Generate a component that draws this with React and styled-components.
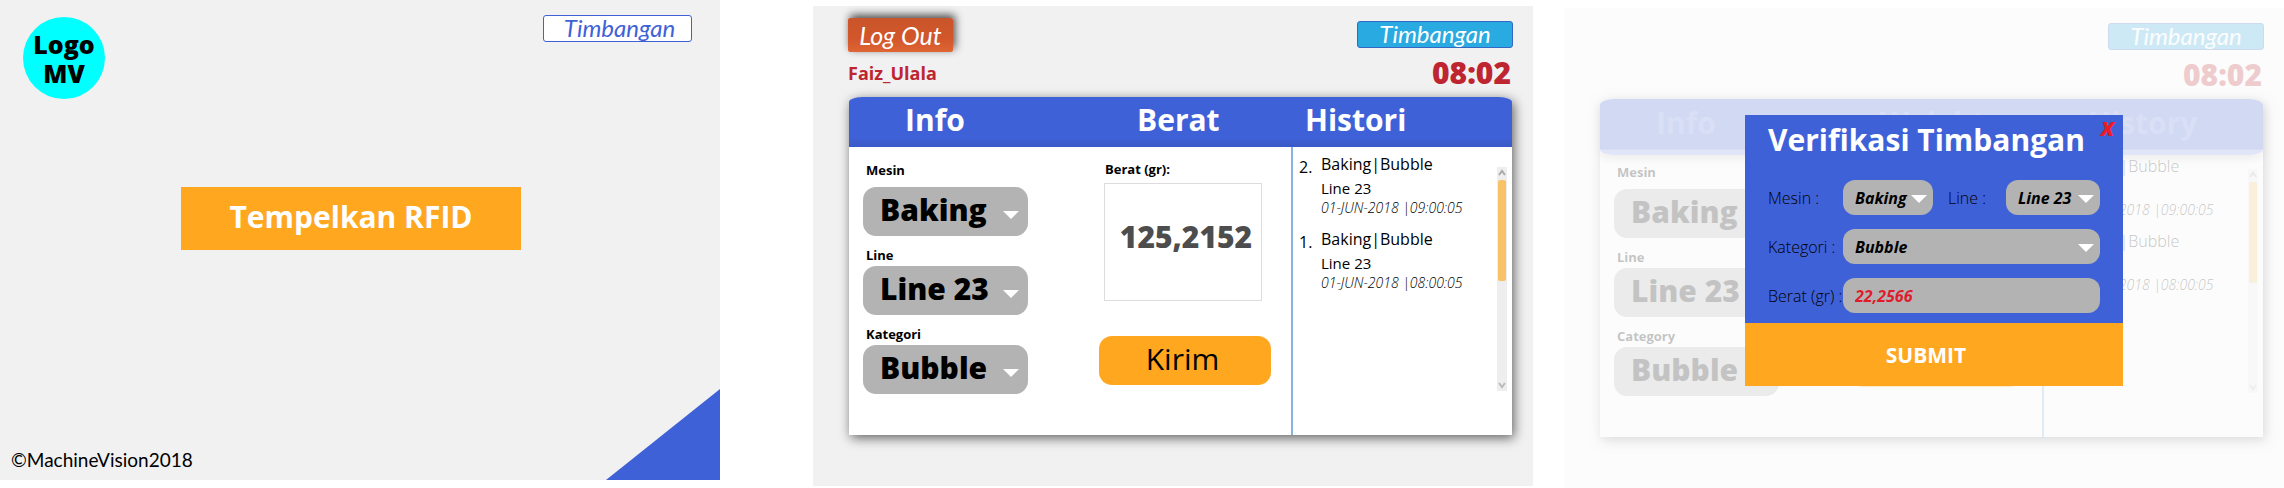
import React, { useId } from "react";
import styled, { createGlobalStyle, css } from "styled-components";

const blue = "#3f61d8";
const orange = "#ffa71f";
const grey = "#b3b3b3";
const red = "#be2530";

const Global = createGlobalStyle`
  * { box-sizing: border-box; }
  body { margin: 0; background: #fff; color: #000; font-family: "Open Sans", "Noto Sans", sans-serif; }
  h1, h2, p, ol { margin: 0; padding: 0; }
  button, select, input { font-family: inherit; border: 0; margin: 0; padding: 0; }
`;

const Page = styled.main`
  display: flex;
  align-items: flex-start;
  min-width: 2000px;
`;

const Screen = styled.section`
  position: relative;
  flex: 1 1 0;
  min-width: 0;
  min-height: 480px;
  display: flex;
  flex-direction: column;
  background: ${(p) => p.$bg || "#f1f1f1"};
  margin: ${(p) => p.$margin || "0"};
`;

/* ---- Welcome screen ---- */

const WelcomeTop = styled.header`
  display: flex;
  justify-content: space-between;
  align-items: flex-start;
  padding: 15px 28px 0 23px;
`;

const Logo = styled.div`
  width: 82px;
  height: 82px;
  margin-top: 2px;
  padding-top: 13px;
  border-radius: 50%;
  background: #00ffff;
  font-size: 25px;
  font-weight: 800;
  line-height: 29px;
  text-align: center;
`;

const Badge = styled.div`
  width: ${(p) => (p.$filled ? 156 : 149)}px;
  height: 27px;
  padding-left: ${(p) => (p.$filled ? 0 : 4)}px;
  border: 1px solid ${(p) => (p.$filled ? "#3567c4" : blue)};
  border-radius: 3px;
  background: ${(p) => (p.$filled ? "#29abe2" : "#fff")};
  color: ${(p) => (p.$filled ? "#fff" : blue)};
  font-family: Lato, "Open Sans", sans-serif;
  font-style: italic;
  font-size: 24px;
  line-height: 24px;
  text-align: center;
`;

const ScanButton = styled.button`
  width: 340px;
  height: 63px;
  margin: 88px auto 0 181px;
  padding-bottom: 4px;
  background: ${orange};
  color: #fff;
  font-size: 30px;
  font-weight: 700;
`;

const WelcomeFoot = styled.footer`
  flex: 1;
  display: flex;
  justify-content: space-between;
  align-items: flex-end;
  padding-left: 11px;
`;

const Copyright = styled.p`
  padding-bottom: 8px;
  font-family: Lato, "Open Sans", sans-serif;
  font-size: 19px;
  line-height: 24px;
`;

const Corner = styled.svg`
  display: block;
  width: 114px;
  height: 91px;
`;

/* ---- Weighing screen ---- */

const Faded = styled.div`
  opacity: ${(p) => (p.$faded ? 0.22 : 1)};
`;

const TopBar = styled.header`
  display: flex;
  justify-content: space-between;
  height: 91px;
  padding: 12px 20px 0 35px;
`;

const TopSide = styled.div`
  display: flex;
  flex-direction: column;
  gap: 9px;
  align-items: ${(p) => (p.$end ? "flex-end" : "flex-start")};
  padding-top: ${(p) => (p.$end ? 3 : 0)}px;
`;

const LogOut = styled.button`
  width: 105px;
  height: 34px;
  border-radius: 2px;
  background: linear-gradient(#c9552a, #d2562a 60%, #df6534);
  box-shadow: 2px -3px 8px rgba(0, 0, 0, 0.7);
  color: #fff;
  font-family: Lato, "Open Sans", sans-serif;
  font-style: italic;
  font-size: 25px;
  line-height: 30px;
`;

const UserName = styled.p`
  color: ${red};
  font-size: 18px;
  font-weight: 700;
  line-height: 24px;
`;

const Clock = styled.time`
  padding-right: 2px;
  color: ${red};
  font-size: 30px;
  font-weight: 800;
  line-height: 32px;
`;

const Panel = styled.div`
  height: 338px;
  margin: 0 21px 0 36px;
  border-radius: 14px 14px 0 0 / 5px 5px 0 0;
  background: #fff;
  box-shadow: 2px 3px 12px rgba(0, 0, 0, 0.6);
`;

const columns = css`
  display: grid;
  grid-template-columns: 250fr 192fr 221fr;
`;

const PanelHead = styled.div`
  ${columns}
  height: 50px;
  border-radius: 14px 14px 0 0 / 5px 5px 0 0;
  background: linear-gradient(${blue} 40px, #3a59c6 50px);
  ${(p) =>
    p.$faded &&
    css`
      height: 56px;
      margin-bottom: -6px;
      border-radius: 14px / 6px;
      background: linear-gradient(${blue} 49px, #3a59c6 50px, #7f96e6 51px);
      box-shadow: 0 4px 8px rgba(0, 0, 0, 0.25);
    `}
`;

const HeadTitle = styled.h2`
  padding-left: ${(p) => p.$indent}px;
  color: ${(p) => (p.$faded ? "rgba(255, 255, 255, 0.2)" : "#fff")};
  font-size: 30px;
  font-weight: 700;
  line-height: ${(p) => (p.$faded ? 48 : 45)}px;
`;

const PanelBody = styled.div`
  ${columns}
  height: 288px;
`;

const InfoColumn = styled.div`
  display: flex;
  flex-direction: column;
  gap: 10px;
  padding: 14px 0 0 14px;
`;

const FieldLabel = styled.label`
  display: block;
  padding-left: 3px;
  margin-bottom: ${(p) => (p.$roomy ? 8 : 2)}px;
  font-size: 13px;
  font-weight: 700;
  line-height: 18px;
`;

const SelectWrap = styled.div`
  position: relative;
  width: ${(p) => p.$width || "100%"};
`;

const bigControl = css`
  height: 49px;
  padding: 0 30px 4px 17px;
  border-radius: 13px;
  font-size: 30px;
  font-weight: 800;
`;

const smallControl = css`
  height: 35px;
  padding: 0 22px 0 12px;
  border-radius: 12px;
  font-size: 16px;
  font-weight: 700;
  font-style: italic;
`;

const Select = styled.select`
  appearance: none;
  display: block;
  width: 100%;
  background: ${grey};
  color: #000;
  ${(p) => (p.$small ? smallControl : bigControl)}
`;

const Arrow = styled.svg`
  position: absolute;
  right: ${(p) => (p.$small ? 6 : 9)}px;
  top: ${(p) => (p.$small ? 15 : 24)}px;
  width: 16px;
  height: 8px;
  pointer-events: none;
`;

const WeightColumn = styled.div`
  padding-top: 13px;
`;

const WeightLabel = styled(FieldLabel)`
  padding-left: 6px;
  margin-bottom: 5px;
`;

const WeightValue = styled.output`
  display: block;
  width: 158px;
  height: 118px;
  margin-left: 5px;
  padding-left: 6px;
  border: 1px solid #ddd;
  color: #4d4d4d;
  font-size: 30px;
  font-weight: 800;
  line-height: 106px;
  text-align: center;
`;

const SendButton = styled.button`
  width: 172px;
  height: 49px;
  margin-top: 35px;
  padding: 0 5px 5px 0;
  border-radius: 13px;
  background: ${orange};
  color: #000;
  font-size: 30px;
`;

const HistoryColumn = styled.div`
  display: flex;
  justify-content: space-between;
  align-items: flex-start;
  padding: 4px 5px 0 6px;
  border-left: 2px solid #86b4de;
`;

const HistoryList = styled.ol`
  list-style: none;
`;

const HistoryItem = styled.li`
  display: flex;
  height: 75px;
`;

const ItemNumber = styled.span`
  width: 22px;
  font-size: 16px;
  line-height: 32px;
  white-space: nowrap;
`;

const ItemTitle = styled.p`
  font-size: 16px;
  font-weight: ${(p) => (p.$faded ? 300 : 400)};
  line-height: 27px;
`;

const ItemLine = styled.p`
  font-size: 15px;
  line-height: 20px;
`;

const ItemDate = styled.time`
  display: block;
  font-size: 14px;
  font-style: italic;
  font-weight: 300;
  line-height: 19px;
`;

const ScrollTrack = styled.div`
  display: flex;
  flex-direction: column;
  align-items: center;
  width: 10px;
  height: 224px;
  margin-top: 16px;
  background: #eee;
`;

const ScrollThumb = styled.div`
  width: 8px;
  height: 101px;
  margin-bottom: auto;
  border-radius: 2px;
  background: #f7c268;
`;

const ScrollArrow = styled.svg`
  width: 10px;
  height: 13px;
`;

/* ---- Verification dialog ---- */

const Overlay = styled.div`
  position: absolute;
  inset: 0;
  display: flex;
  justify-content: center;
  align-items: flex-start;
  padding: 107px 0 0 20px;
`;

const Dialog = styled.form`
  position: relative;
  width: 378px;
  background: ${blue};
`;

const DialogTitle = styled.h2`
  padding-left: 23px;
  color: #fff;
  font-size: 30px;
  font-weight: 700;
  line-height: 50px;
  white-space: nowrap;
`;

const CloseButton = styled.button`
  position: absolute;
  top: 4px;
  right: 9px;
  background: none;
  color: #ed1c24;
  font-size: 20px;
  font-weight: 800;
  font-style: italic;
  line-height: 20px;
`;

const DialogRows = styled.div`
  display: flex;
  flex-direction: column;
  gap: 14px;
  padding: 15px 23px 10px;
`;

const DialogRow = styled.div`
  display: grid;
  grid-template-columns: ${(p) => (p.$pair ? "75px 90px 15px 58px 1fr" : "75px 1fr")};
  align-items: center;
`;

const DialogLabel = styled.label`
  grid-column: ${(p) => p.$column || "auto"};
  font-size: 16px;
  font-weight: 300;
  line-height: 24px;
  white-space: nowrap;
`;

const WeightInput = styled.input`
  width: 100%;
  background: ${grey};
  ${smallControl}
  color: #e01b2c;
`;

const SubmitButton = styled.button`
  display: block;
  width: 100%;
  height: 63px;
  padding: 0 16px 0 0;
  background: ${orange};
  color: #fff;
  font-size: 21px;
  font-weight: 700;
`;

function Dropdown({ id, value, small, width }) {
  return (
    <SelectWrap $width={width}>
      <Select id={id} $small={small} defaultValue={value}>
        <option>{value}</option>
      </Select>
      <Arrow $small={small} viewBox="0 0 16 8" aria-hidden="true">
        <path d="M0 0H16L8 8Z" fill="#fff" />
      </Arrow>
    </SelectWrap>
  );
}

function InfoField({ label, value, roomy }) {
  const id = useId();
  return (
    <div>
      <FieldLabel htmlFor={id} $roomy={roomy}>{label}</FieldLabel>
      <Dropdown id={id} value={value} width="165px" />
    </div>
  );
}

const history = [
  { n: 2, time: "09:00:05" },
  { n: 1, time: "08:00:05" },
];

function Weighing({ faded, titles, category }) {
  const weightId = useId();
  return (
    <Faded $faded={faded} inert={faded}>
      <TopBar>
        <TopSide>
          {!faded && <LogOut type="button">Log Out</LogOut>}
          {!faded && <UserName>Faiz_Ulala</UserName>}
        </TopSide>
        <TopSide $end>
          <Badge $filled>Timbangan</Badge>
          <Clock>08:02</Clock>
        </TopSide>
      </TopBar>
      <Panel>
        <PanelHead $faded={faded}>
          {titles.map(([text, indent]) => (
            <HeadTitle key={text} $indent={indent} $faded={faded}>{text}</HeadTitle>
          ))}
        </PanelHead>
        <PanelBody>
          <InfoColumn>
            <InfoField label="Mesin" value="Baking" roomy />
            <InfoField label="Line" value="Line 23" />
            <InfoField label={category} value="Bubble" />
          </InfoColumn>
          <WeightColumn>
            <WeightLabel htmlFor={weightId}>Berat (gr):</WeightLabel>
            <WeightValue id={weightId}>{faded ? "" : "125,2152"}</WeightValue>
            <SendButton type="button">{faded ? "" : "Kirim"}</SendButton>
          </WeightColumn>
          <HistoryColumn>
            <HistoryList>
              {history.map((h) => (
                <HistoryItem key={h.n}>
                  <ItemNumber>{h.n}.</ItemNumber>
                  <div>
                    <ItemTitle $faded={faded}>Baking|Bubble</ItemTitle>
                    <ItemLine>Line 23</ItemLine>
                    <ItemDate>01-JUN-2018 |{h.time}</ItemDate>
                  </div>
                </HistoryItem>
              ))}
            </HistoryList>
            <ScrollTrack aria-hidden="true">
              <ScrollArrow viewBox="0 0 10 13">
                <path d="M2 8L5 4L8 8" fill="none" stroke="#aaa" strokeWidth="2" />
              </ScrollArrow>
              <ScrollThumb />
              <ScrollArrow viewBox="0 0 10 13">
                <path d="M2 5L5 9L8 5" fill="none" stroke="#bbb" strokeWidth="2" />
              </ScrollArrow>
            </ScrollTrack>
          </HistoryColumn>
        </PanelBody>
      </Panel>
    </Faded>
  );
}

function VerifyDialog() {
  const id = useId();
  return (
    <Overlay>
      <Dialog aria-labelledby={id + "title"} onSubmit={(e) => e.preventDefault()}>
        <DialogTitle id={id + "title"}>Verifikasi Timbangan</DialogTitle>
        <CloseButton type="button">X</CloseButton>
        <DialogRows>
          <DialogRow $pair>
            <DialogLabel htmlFor={id + "machine"}>Mesin :</DialogLabel>
            <Dropdown id={id + "machine"} value="Baking" small />
            <DialogLabel $column={4} htmlFor={id + "line"}>Line :</DialogLabel>
            <Dropdown id={id + "line"} value="Line 23" small />
          </DialogRow>
          <DialogRow>
            <DialogLabel htmlFor={id + "category"}>Kategori :</DialogLabel>
            <Dropdown id={id + "category"} value="Bubble" small />
          </DialogRow>
          <DialogRow>
            <DialogLabel htmlFor={id + "weight"}>Berat (gr) :</DialogLabel>
            <WeightInput id={id + "weight"} defaultValue="22,2566" />
          </DialogRow>
        </DialogRows>
        <SubmitButton type="submit">SUBMIT</SubmitButton>
      </Dialog>
    </Overlay>
  );
}

export default function App() {
  return (
    <>
      <Global />
      <Page>
        <Screen>
          <WelcomeTop>
            <Logo>Logo<br />MV</Logo>
            <Badge>Timbangan</Badge>
          </WelcomeTop>
          <ScanButton type="button">Tempelkan RFID</ScanButton>
          <WelcomeFoot>
            <Copyright>©MachineVision2018</Copyright>
            <Corner viewBox="0 0 114 91" aria-hidden="true">
              <path d="M114 0V91H0Z" fill={blue} />
            </Corner>
          </WelcomeFoot>
        </Screen>
        <Screen $margin="6px 31px 0 93px">
          <Weighing
            titles={[["Info", 56], ["Berat", 38], ["Histori", 14]]}
            category="Kategori"
          />
        </Screen>
        <Screen $margin="8px 0 0" $bg="#fcfcfc">
          <Weighing
            faded
            titles={[["Info", 56], ["Weight", 30], ["History", 46]]}
            category="Category"
          />
          <VerifyDialog />
        </Screen>
      </Page>
    </>
  );
}
